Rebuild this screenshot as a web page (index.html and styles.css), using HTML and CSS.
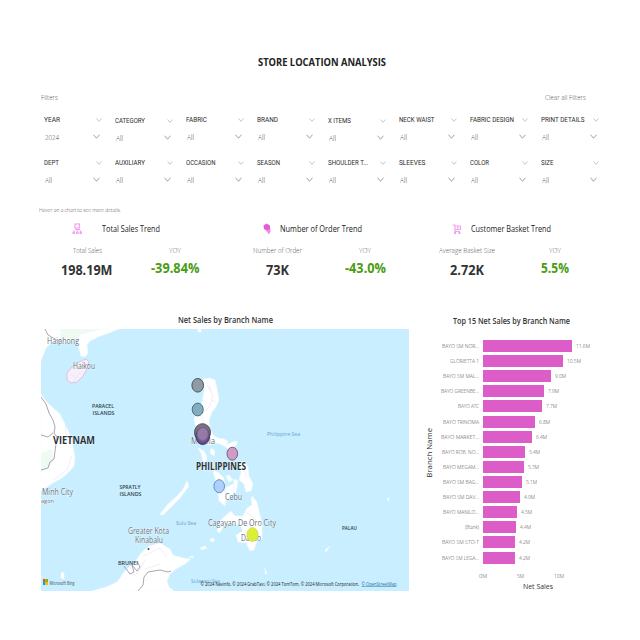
FILE: index.html
```html
<!DOCTYPE html>
<html lang="en">
<head>
<meta charset="utf-8">
<title>Store Location Analysis</title>
<link rel="stylesheet" href="styles.css">
</head>
<body>
<main class="report">
  <h1 class="title"><span data-w="128">STORE LOCATION ANALYSIS</span></h1>

  <div class="filter-head">
    <span data-w="17">Filters</span>
    <span data-w="41">Clear all Filters</span>
  </div>
  <section class="filters" id="filters"></section>
  <p class="hint"><span data-w="82">Hover on a chart to see more details.</span></p>

  <section class="kpis">
    <article class="kpi">
      <header class="kpi-head">
        <svg class="kpi-icon" viewBox="0 0 12 12"><g fill="none" stroke="#f3a2ee" stroke-width="1.200"><rect x="4" y="1" width="4.500" height="4"/><path d="M4 6.500h5M3 9V7.500M6.200 6v3M9.500 9V7.500"/></g><g fill="#f3a2ee"><rect x="1.500" y="8.500" width="2.500" height="2.500"/><rect x="5" y="9" width="2.500" height="2"/><rect x="8.500" y="8.500" width="2.500" height="2.500"/></g></svg>
        <h2><span data-w="58">Total Sales Trend</span></h2>
      </header>
      <div class="metric"><span class="name" data-w="29">Total Sales</span><b class="value" data-w="51.500">198.19M</b></div>
      <div class="metric"><span class="name" data-w="12">YOY</span><b class="value change" data-w="48.500">-39.84%</b></div>
    </article>
    <article class="kpi">
      <header class="kpi-head">
        <svg class="kpi-icon" viewBox="0 0 12 12"><path d="M2.500 2.500 5.500 .5 9 2.500v5L7 8.500 3 6z" fill="#e35fd6"/><path d="m5 7.500 4.500-1.500v2.500L8 11.500z" fill="#f08be8"/></svg>
        <h2><span data-w="82">Number of Order Trend</span></h2>
      </header>
      <div class="metric"><span class="name" data-w="49">Number of Order</span><b class="value" data-w="23">73K</b></div>
      <div class="metric"><span class="name" data-w="12">YOY</span><b class="value change" data-w="41">-43.0%</b></div>
    </article>
    <article class="kpi">
      <header class="kpi-head">
        <svg class="kpi-icon" viewBox="0 0 12 12"><g fill="none" stroke="#f3a2ee" stroke-width="1.200"><path d="M1.500 2H4v6.500h5M4 3h5.500v3.500H4M6.800 3v3.500"/></g><g fill="#f08be8"><circle cx="4" cy="10" r="1.100"/><circle cx="8.500" cy="10" r="1.100"/></g></svg>
        <h2><span data-w="80">Customer Basket Trend</span></h2>
      </header>
      <div class="metric"><span class="name" data-w="56">Average Basket Size</span><b class="value" data-w="34">2.72K</b></div>
      <div class="metric"><span class="name" data-w="12">YOY</span><b class="value change" data-w="28">5.5%</b></div>
    </article>
  </section>

  <section class="charts">
    <article class="map-card">
      <h3><span data-w="95">Net Sales by Branch Name</span></h3>
      <svg class="map" viewBox="41 329 368 262">
        <rect x="41" y="329" width="368" height="262" fill="#c8eeff"/>
        <g class="land">
          <path d="M41 329h78l-10 4-11 4-8 4-3 4 1 8-3 4-4-1-2-7-1-7-8-1-9 2-6-1-5 2-4 4-5 13z"/>
          <path d="M41 394l5 7 6 6 8 7 5 10 5 11 3 11 2 12-1 8-5 6-7 6-9 5-12 8z"/>
          <path class="rose" d="M67 373l5-6 7-5 7-3 3 3-2 7-4 7-6 6-6 1-4-3z"/>
          <path d="M203 379l7-1 5 2 2 8 2 12-3 7-4 5-3 8 1 8 3 7 5 3 6 1 4 2-1 4 5-3 5-1 0 4-5 3 2 5-4-2-4-4-6-3-5-1-6 2-6-2-3-8-4-7-2-8 2-7 5-2 1-8 2-12z"/>
          <path d="M198 448l6 3 3 6-1 6-3-2-2-8zM211 448l4 3-1 5-4-3zM213 471l5 1 6 6 1 8-9-4zM218 490l6-1 2 8-1 9-6-5zM225 488l8-4 3 5-5 8-5 4zM238 464l6-3 4 6 1 9 4 8-2 7-5 1-2-8-5-4 2-8zM234 479l4 2-2 12-3-1zM226 476l3-1 4 5-4 2z"/>
          <path d="M187 481l2 5-9 12-8 8-9 9-3-1 8-10 9-8 6-7z"/>
          <path d="M252 496l5 6 2 9 3 12 0 16-5 2-3 9-4 1-4-8-8-1-2-7 7-4-3-6-8-1-8 1-4 8-3-2 2-9 6-6 6-5 4 5 8 0 4-8 5-3-1-6z"/>
          <path d="M92 591l14-4 11-5 8-11 10-9 6-9 8-7 11-3 10 6 3 6 10 3 8 1-6 5-9 5-6 5-3 7 2 6 5 4z"/>
          <path d="M61 573l3-1v7l-3-1zM200 548l5-2 2 2-5 2zM211 538l4 1-2 3-3-1zM189 557l5-1-1 2z"/>
          <path d="M198 329h3v3h-3zM265 568l2 6h-2zM387 500l2-3v4zM325 550l5-4-4 6z"/>
        </g>
        <g class="green"><path d="M61 329h40l-10 3-10 2-4 7-7-3-10 1z"/><path d="M41 453l11-4 2 12-4 5-9 6z"/></g>
        <g class="hatch">
          <path d="M69 373l7 5 5-7M76 378l-3 4M73 367l5 3 8-7M196 412l5 4 3 7M207 385l6 10-3 11-8 8M209 385l3 9M211 400l5 2M65 425l2 15 4 8M72 455l-5 15-14 10M240 520l10 5 2 14M245 540l12-8M246 512l10 8M143 556l17-8 7 10M145 569l15-5M243 467l4 10M218 478l6 6M137 574l8-14"/>
        </g>
        <g class="border">
          <path d="M45 329l3 6 9 5 5 2M41 397l5 7 3 9 4 7 2 7-1 6 3 4-2 14-1 8-4 3-2 6-7 2M41 435l7 2 5-4M124 566l6 8 4-2-2-7 5 6 3-4-3-6M138 591l5-6 1-8 4-5 12-2 8 2 3-1"/>
        </g>
        <g class="city">
          <text x="47" y="343.500" textLength="32">Haiphong</text>
          <text x="73" y="369" textLength="22">Haikou</text>
          <text x="191" y="444" textLength="24">Manila</text>
          <text x="42" y="495" textLength="31">Minh City</text>
          <text x="128" y="533.500" textLength="41">Greater Kota</text>
          <text x="135" y="543" textLength="28">Kinabalu</text>
          <text x="225" y="500" textLength="17">Cebu</text>
          <text x="208" y="526" textLength="68">Cagayan De Oro City</text>
          <text x="241" y="541" textLength="20">Davao</text>
          <text class="faint" x="41" y="503" textLength="13">agon</text>
        </g>
        <g class="sea">
          <text x="267" y="435.500" textLength="33">Philippine Sea</text>
          <text x="176" y="524.500" textLength="20">Sulu Sea</text>
          <text x="191" y="583" textLength="29">Sulawesi Sea</text>
        </g>
        <g class="region">
          <text x="92" y="408" textLength="22">PARACEL</text><text x="92.500" y="415" textLength="22">ISLANDS</text>
          <text x="119.500" y="489" textLength="21">SPRATLY</text><text x="119.500" y="496" textLength="22">ISLANDS</text>
          <text x="118" y="565" textLength="20">BRUNEI</text><text x="342" y="529.500" textLength="15">PALAU</text>
        </g>
        <g class="country">
          <text x="53" y="444" textLength="42">VIETNAM</text>
          <text x="196" y="469.500" textLength="50">PHILIPPINES</text>
        </g>
        <circle cx="148.500" cy="549" r="1" fill="#444"/>
        <g class="pins">
          <ellipse cx="197.700" cy="385.300" rx="5.800" ry="6.800" fill="#8e9ba3" stroke="#4b5358"/>
          <ellipse cx="197.700" cy="409.500" rx="5.500" ry="6.400" fill="#83adbe" stroke="#4d6f7f"/>
          <ellipse cx="202.700" cy="436" rx="6.800" ry="8.600" fill="#6a5590" stroke="#4c3d82"/>
          <ellipse cx="202.500" cy="432.500" rx="8" ry="8.800" fill="#77747f" stroke="#4d4b55"/>
          <ellipse cx="202.700" cy="435.500" rx="6.500" ry="8" fill="#6a5590" stroke="#4c3d82"/>
          <ellipse cx="202.700" cy="434" rx="5.500" ry="6.500" fill="#957aa5" stroke="#7b6690"/>
          <ellipse cx="232.300" cy="453.700" rx="5.300" ry="6.500" fill="#cf9dc3" stroke="#805b85"/>
          <ellipse cx="219.200" cy="486.200" rx="5.300" ry="6.500" fill="#acd0fb" stroke="#6b8fc2"/>
          <ellipse cx="252.500" cy="534.500" rx="5.500" ry="6.800" fill="#dbef34" stroke="#cfe04c"/>
        </g>
        <g class="credit">
          <path fill="#f25022" d="M43 579h2.500v3H43z"/><path fill="#7fba00" d="M45.500 579H48v3h-2.500z"/><path fill="#00a4ef" d="M43 582h2.500v3H43z"/><path fill="#ffb900" d="M45.500 582H48v3h-2.500z"/>
          <text class="bing" x="49.500" y="584.500" textLength="25">Microsoft Bing</text>
          <text x="200.500" y="585.500" textLength="158.500">© 2024 Navinfo, © 2024 GrabTaxi, © 2024 TomTom, © 2024 Microsoft Corporation,</text>
          <text class="link" x="361.500" y="585.500" textLength="35">© OpenStreetMap</text>
        </g>
      </svg>
    </article>

    <article class="bar-card">
      <h3><span data-w="117">Top 15 Net Sales by Branch Name</span></h3>
      <div class="plot">
        <div class="y-title"><span>Branch Name</span></div>
        <div class="bars" id="bars"></div>
      </div>
      <div class="x-axis"><span data-w="8">0M</span><span data-w="7">5M</span><span data-w="10">10M</span></div>
      <div class="x-title"><span data-w="30">Net Sales</span></div>
    </article>
  </section>
</main>
<script src="report.js"></script>
</body>
</html>
```
FILE: styles.css
```css
* { box-sizing: border-box; }
body { margin: 0; background: #fff; font-family: "Open Sans", "Noto Sans", sans-serif; color: #333; }
h1, h2, h3, p { margin: 0; }
[data-w] { display: inline-block; white-space: nowrap; transform-origin: 0 50%; flex: none; }

.report { width: 640px; height: 640px; overflow: hidden; padding: 54px 31px 0 40px; }
.title { height: 36px; padding-left: 217.5px; font-size: 11px; line-height: 16px; font-weight: 700; color: #222; }

.filter-head { display: flex; justify-content: space-between; height: 24px; padding: 0 23px 0 .5px; font-size: 7.5px; line-height: 15px; font-weight: 300; color: #555; }

.filters { display: grid; grid-template-columns: repeat(8, 71px); grid-auto-rows: 43px; height: 91px; padding-left: 3.5px; }
.filter { width: 58px; }
.filter-label, .filter-value { display: flex; justify-content: space-between; align-items: center; height: 12px; line-height: 12px; }
.filter-label { font-family: Roboto, sans-serif; font-size: 7.9px; color: #2b2b2b; }
.filter-value { margin-top: 4.8px; padding: 0 1.5px 0 1px; font-size: 8px; font-weight: 300; color: #444; }
.low { padding-top: 1px; }
.chev { width: 6px; height: 4px; fill: none; stroke: #999; stroke-width: .7; }
.filter-value .chev { width: 7px; height: 5px; stroke: #777; }

.hint { height: 17px; font-size: 5.8px; line-height: 10px; font-weight: 300; color: #444; margin-left: -1px; }

.kpis { display: grid; grid-template-columns: repeat(3, 190px); height: 92px; padding-left: 3px; }
.kpi { display: grid; grid-template-columns: 88px 88px; grid-template-rows: 22px 50px; }
.kpi-head { grid-column: 1 / 3; display: grid; grid-template-columns: 28px 12px 96px; height: 14px; align-items: center; }
.kpi-icon { grid-column: 2; width: 12px; height: 12px; }
.kpi-head h2 { width: 96px; text-align: center; font-size: 9.5px; line-height: 14px; font-weight: 400; color: #222; }
.metric { display: flex; flex-direction: column; align-items: center; }
.name { font-size: 7.8px; line-height: 12px; font-weight: 300; color: #555; }
.value { margin-top: 5px; font-size: 14.5px; line-height: 18px; font-weight: 700; color: #333; }
.value.change { margin-top: 2.5px; color: #4b9c14; }

.charts { display: grid; grid-template-columns: 370px 199px; }
.map-card h3 { height: 15px; text-align: center; font-size: 8.3px; line-height: 12px; font-weight: 600; }
.map { display: block; width: 368px; height: 262px; margin-left: 1px; }
.land { fill: #fff; stroke: #eef8fb; stroke-width: .6; stroke-linejoin: round; }
.land .rose { stroke: #dcc2e5; stroke-width: 1; fill: #f7effb; }
.green { fill: #eefaf2; }
.hatch { fill: none; stroke: #f4e2ef; stroke-width: .7; }
.border { fill: none; stroke: #a09ca6; stroke-width: .9; }
.city { font-size: 8.3px; fill: #67737c; stroke: #fff; stroke-width: .5; paint-order: stroke; }
.city .faint { font-size: 6px; }
.sea { font-size: 5.6px; fill: #6c9fd2; }
.region { font-size: 6px; font-weight: 600; fill: #333e46; }
.country { font-size: 11px; font-weight: 700; fill: #2c3439; stroke: #fff; stroke-width: .6; paint-order: stroke; }
.pins { stroke-width: 1; }
.credit { font-size: 5px; fill: #222; }
.credit .bing { font-weight: 600; fill: #69747b; }
.credit .link { fill: #2c71a9; text-decoration: underline; }

.bar-card { padding-left: 13px; }
.bar-card h3 { height: 24.5px; padding-left: 29.5px; font-size: 8.8px; line-height: 14px; font-weight: 600; color: #333; }
.plot { display: grid; grid-template-columns: 12px 1fr; }
.y-title { display: flex; align-items: center; justify-content: center; writing-mode: vertical-rl; transform: rotate(180deg); font-size: 7.8px; line-height: 12px; font-weight: 500; }
.bars { display: grid; grid-auto-rows: 15.12px; }
.bar-row { display: grid; grid-template-columns: 44px 1fr; column-gap: 4px; align-items: center; font-size: 6px; font-weight: 300; color: #444; }
.bar-label { display: flex; justify-content: flex-end; line-height: 12px; }
.bar-track { display: flex; align-items: center; gap: 4px; line-height: 12px; }
.bar { height: 12px; background: #dc5cc8; }
.x-axis { display: flex; padding: 6px 0 0 55.5px; gap: 30px; font-size: 6px; line-height: 10px; font-weight: 300; color: #444; }
.x-title { padding-left: 100px; font-size: 7.4px; line-height: 11px; font-weight: 500; }
```
FILE: report.js
```js
const filters = [
  ["YEAR", 16, "2024"], ["CATEGORY", 30], ["FABRIC", 21], ["BRAND", 21],
  ["X ITEMS", 23], ["NECK WAIST", 35.5], ["FABRIC DESIGN", 44], ["PRINT DETAILS", 43.5],
  ["DEPT", 15], ["AUXILIARY", 30], ["OCCASION", 29.5], ["SEASON", 23],
  ["SHOULDER T...", 40], ["SLEEVES", 26.5], ["COLOR", 19], ["SIZE", 12.5]
];
const chev = '<svg class="chev" viewBox="0 0 7 5"><path d="M.5 .7 3.500 4.200 6.500 .7"/></svg>';
document.getElementById("filters").innerHTML = filters.map(([name, w, value = "All"], i) =>
  `<div class="filter${i === 1 || i === 4 ? " low" : ""}">
    <div class="filter-label"><span data-w="${w}">${name}</span>${chev}</div>
    <div class="filter-value"><span data-w="${value === "All" ? 7 : 14}">${value}</span>${chev}</div>
  </div>`).join("");

const branches = [
  ["BAYO SM NOR...", 37, 88.5, "11.6M"], ["GLORIETTA 1", 29, 80, "10.5M"],
  ["BAYO SM MAL...", 36, 68, "9.0M"], ["BAYO GREENBE...", 38, 60.5, "7.9M"],
  ["BAYO ATC", 21, 59, "7.7M"], ["BAYO TRINOMA", 36, 52, "6.8M"],
  ["BAYO MARKET...", 38, 49, "6.4M"], ["BAYO ROB. NO...", 37, 41.5, "5.4M"],
  ["BAYO MEGAM...", 36, 41, "5.3M"], ["BAYO SM BAG...", 36, 39, "5.1M"],
  ["BAYO SM DAV...", 36, 37, "4.9M"], ["BAYO MANILO...", 36, 34, "4.5M"],
  ["(Blank)", 14, 33, "4.4M"], ["BAYO SM STO-T", 37, 32, "4.2M"],
  ["BAYO SM LEGA...", 37, 32, "4.2M"]
];
document.getElementById("bars").innerHTML = branches.map(([name, w, len, value]) =>
  `<div class="bar-row">
    <div class="bar-label"><span data-w="${w}">${name}</span></div>
    <div class="bar-track"><div class="bar" style="width:${len}px"></div><span data-w="${value.length > 4 ? 14 : 11}">${value}</span></div>
  </div>`).join("");

// Condense each label horizontally to its column width.
document.querySelectorAll("[data-w]").forEach(el => {
  const target = Number(el.dataset.w);
  const range = document.createRange();
  range.selectNodeContents(el);
  const natural = range.getBoundingClientRect().width;
  el.style.width = target + "px";
  el.style.transform = `scaleX(${target / natural})`;
});
document.querySelectorAll(".map text").forEach(t => t.setAttribute("lengthAdjust", "spacingAndGlyphs"));
```
